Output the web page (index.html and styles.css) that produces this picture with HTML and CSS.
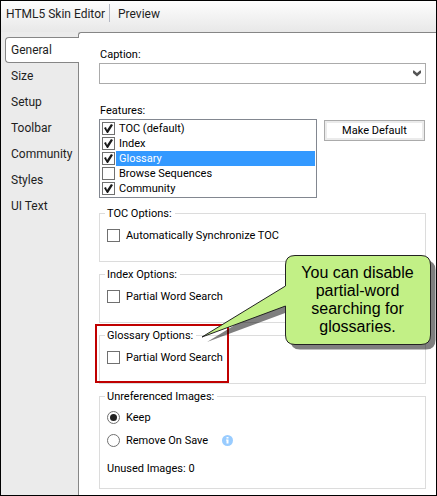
FILE: index.html
```html
<!DOCTYPE html>
<html lang="en">
<head>
<meta charset="utf-8">
<title>HTML5 Skin Editor</title>
<link rel="stylesheet" href="styles.css">
</head>
<body>
<div class="window">
  <header class="header">
    <h1 class="title">HTML5 Skin Editor</h1>
    <a class="preview" href="#">Preview</a>
  </header>
  <div class="body">
    <nav class="tabs">
      <a class="tab active" href="#">General</a>
      <a class="tab" href="#">Size</a>
      <a class="tab" href="#">Setup</a>
      <a class="tab" href="#">Toolbar</a>
      <a class="tab" href="#">Community</a>
      <a class="tab" href="#">Styles</a>
      <a class="tab" href="#">UI Text</a>
    </nav>
    <main class="panel">
      <label class="label" for="caption">Caption:</label>
      <div class="combo">
        <select id="caption" class="select"><option></option></select>
        <svg class="chevron" viewBox="0 0 8 7" aria-hidden="true"><path d="M0 0.5 L1 0.5 L4 3 L7 0.5 L8 0.5 V3 L4 6.5 L0 3 Z"/></svg>
      </div>

      <div class="label features-label" id="features">Features:</div>
      <div class="features">
        <div class="list" role="group" aria-labelledby="features">
          <label class="item"><input class="check" type="checkbox" checked><span class="name">TOC (default)</span></label>
          <label class="item"><input class="check" type="checkbox" checked><span class="name">Index</span></label>
          <label class="item selected"><input class="check" type="checkbox" checked><span class="name">Glossary</span></label>
          <label class="item"><input class="check" type="checkbox"><span class="name">Browse Sequences</span></label>
          <label class="item"><input class="check" type="checkbox" checked><span class="name">Community</span></label>
        </div>
        <button class="button" type="button">Make Default</button>
      </div>

      <div class="groups">
        <fieldset class="group">
          <legend>TOC Options:</legend>
          <label class="option"><input class="check" type="checkbox">Automatically Synchronize TOC</label>
        </fieldset>
        <fieldset class="group">
          <legend>Index Options:</legend>
          <label class="option"><input class="check" type="checkbox">Partial Word Search</label>
        </fieldset>
        <div class="annotated">
          <fieldset class="group">
            <legend>Glossary Options:</legend>
            <label class="option"><input class="check" type="checkbox">Partial Word Search</label>
          </fieldset>
          <div class="highlight"></div>
          <div class="callout">
            <svg class="bubble" viewBox="0 0 234 97" aria-hidden="true">
              <path class="shadow" transform="translate(5 5)" d="M93 .5H219Q228.500 .5 228.500 10V80Q228.500 89.500 219 89.500H93Q83.500 89.500 83.500 80V51L0 82L83.500 31V10Q83.500 .5 93 .5Z"/>
              <path class="shape" d="M93 .5H219Q228.500 .5 228.500 10V80Q228.500 89.500 219 89.500H93Q83.500 89.500 83.500 80V51L0 82L83.500 31V10Q83.500 .5 93 .5Z"/>
            </svg>
            <p class="callout-text">You can disable<br>partial-word<br>searching for<br>glossaries.</p>
          </div>
        </div>
        <fieldset class="group images">
          <legend>Unreferenced Images:</legend>
          <label class="option choice"><input class="radio" type="radio" name="images" checked>Keep</label>
          <div class="choice-row">
            <label class="option choice"><input class="radio" type="radio" name="images">Remove On Save</label>
            <svg class="info" viewBox="0 0 11 11" aria-hidden="true"><circle cx="5.500" cy="5.500" r="5.500" fill="#99ccff"/><path fill="#fff" d="M4.500 2h2v1.500h-2zM4 4.500h2.500v4h-2v-3H4z"/></svg>
          </div>
          <p class="unused">Unused Images: 0</p>
        </fieldset>
      </div>
    </main>
  </div>
</div>
</body>
</html>
```

FILE: styles.css
```css
* {
  box-sizing: border-box;
}

body {
  margin: 0;
  background: #fff;
  color: #000;
  font: 11px/14px Roboto, "Noto Sans", sans-serif;
}

.window {
  display: flex;
  flex-direction: column;
  min-height: 100vh;
  border: 1px solid #000;
  background: #ebebeb;
}

.header {
  display: flex;
  height: 31px;
  padding: 3px 5px;
  background: linear-gradient(#fdfdfd, #e8e8e8);
  color: #1e1e1e;
  font: 12px/20px Roboto, "Noto Sans", sans-serif;
}

.title {
  width: 104px;
  height: 18px;
  margin: 0;
  border-right: 1px solid #b4b8c4;
  font: inherit;
  white-space: nowrap;
}

.preview {
  margin-left: 8px;
  color: inherit;
  text-decoration: none;
}

.body {
  display: flex;
  flex: 1;
}

.tabs {
  display: flex;
  flex: 0 0 77px;
  flex-direction: column;
  padding: 5px 0 0 4px;
}

.tab {
  height: 26px;
  padding-left: 6px;
  color: #1e1e1e;
  font: 12px/27px Roboto, "Noto Sans", sans-serif;
  text-decoration: none;
}

.tab.active {
  position: relative;
  z-index: 1;
  margin-right: -1px;
  padding-left: 5px;
  border: 1px solid #868686;
  border-right: 0;
  border-radius: 4px 0 0 4px;
  background: #fff;
  line-height: 25px;
}

.panel {
  flex: 1;
  min-width: 0;
  padding: 15px 10px 6px 20px;
  border-top: 1px solid #868686;
  border-left: 1px solid #868686;
  border-top-left-radius: 3px;
  background: #fff;
}

.label {
  display: block;
  margin-bottom: 1px;
  padding-left: 1px;
}

.combo {
  display: flex;
  position: relative;
}

.select {
  flex: 1;
  height: 21px;
  border: 1px solid #ababab;
  border-radius: 0;
  appearance: none;
  background: #fff;
}

.chevron {
  position: absolute;
  top: 7px;
  right: 5px;
  width: 8px;
  height: 7px;
  fill: #555;
  pointer-events: none;
}

.features-label {
  margin-top: 20px;
}

.features {
  display: flex;
  gap: 7px;
  align-items: flex-start;
  padding-right: 1px;
}

.list {
  flex: 1;
  padding: 1px;
  border: 1px solid #828790;
}

.item {
  display: flex;
  gap: 1px;
  align-items: center;
  height: 15px;
  padding-left: 1px;
}

.name {
  flex: 1;
  padding-left: 3px;
  line-height: 15px;
}

.selected .name {
  background: #3399ff;
  color: #fff;
}

.check,
.radio {
  flex: none;
  width: 13px;
  height: 13px;
  margin: 0;
  border: 1px solid #707070;
  appearance: none;
  background: #fff;
}

.check:checked::before {
  content: "";
  display: block;
  width: 11px;
  height: 11px;
  background: #1a1a1a;
  clip-path: polygon(1px 5px, 3px 4px, 4px 7px, 8px 1px, 10px 2px, 5px 10px, 4px 10px);
}

.radio {
  display: grid;
  place-items: center;
  border-radius: 50%;
}

.radio:checked::before {
  content: "";
  width: 7px;
  height: 7px;
  border-radius: 50%;
  background: #222;
}

.button {
  width: 101px;
  height: 21px;
  margin-top: 1px;
  padding: 0;
  border: 1px solid #ababab;
  background: #fff;
  box-shadow: inset 0 0 0 2px #ebebeb;
  color: #000;
  font: inherit;
}

.groups {
  display: flex;
  flex-direction: column;
  gap: 6px;
  margin-top: 9px;
}

.group {
  min-width: 0;
  margin: 0;
  padding: 9px 7px 19px;
  border: 1px solid #dcdcdc;
}

.group legend {
  height: 13px;
  margin-left: -2px;
  padding: 0 3px 0 2px;
  line-height: 14px;
}

.option {
  display: flex;
  gap: 6px;
  align-items: center;
  height: 13px;
}

.annotated {
  position: relative;
}

.highlight {
  position: absolute;
  top: -5px;
  left: -4px;
  width: 134px;
  height: 59px;
  border: 2px solid #c00000;
  pointer-events: none;
}

.callout {
  position: absolute;
  top: -74px;
  right: -10px;
  width: 234px;
  height: 97px;
  pointer-events: none;
}

.bubble {
  display: block;
  width: 100%;
  height: 100%;
}

.shadow {
  fill: rgba(0, 0, 0, 0.5);
}

.shape {
  fill: #c2f086;
  stroke: #222;
}

.callout-text {
  position: absolute;
  top: 9px;
  right: 6px;
  width: 145px;
  margin: 0;
  font: 16px/18px "Liberation Sans", Arial, sans-serif;
  text-align: center;
}

.images {
  padding: 3px 7px 12px;
}

.choice {
  height: 23px;
}

.choice-row {
  display: flex;
  gap: 14px;
  align-items: center;
}

.info {
  width: 11px;
  height: 11px;
}

.unused {
  margin: 10px 0 0;
}
```
